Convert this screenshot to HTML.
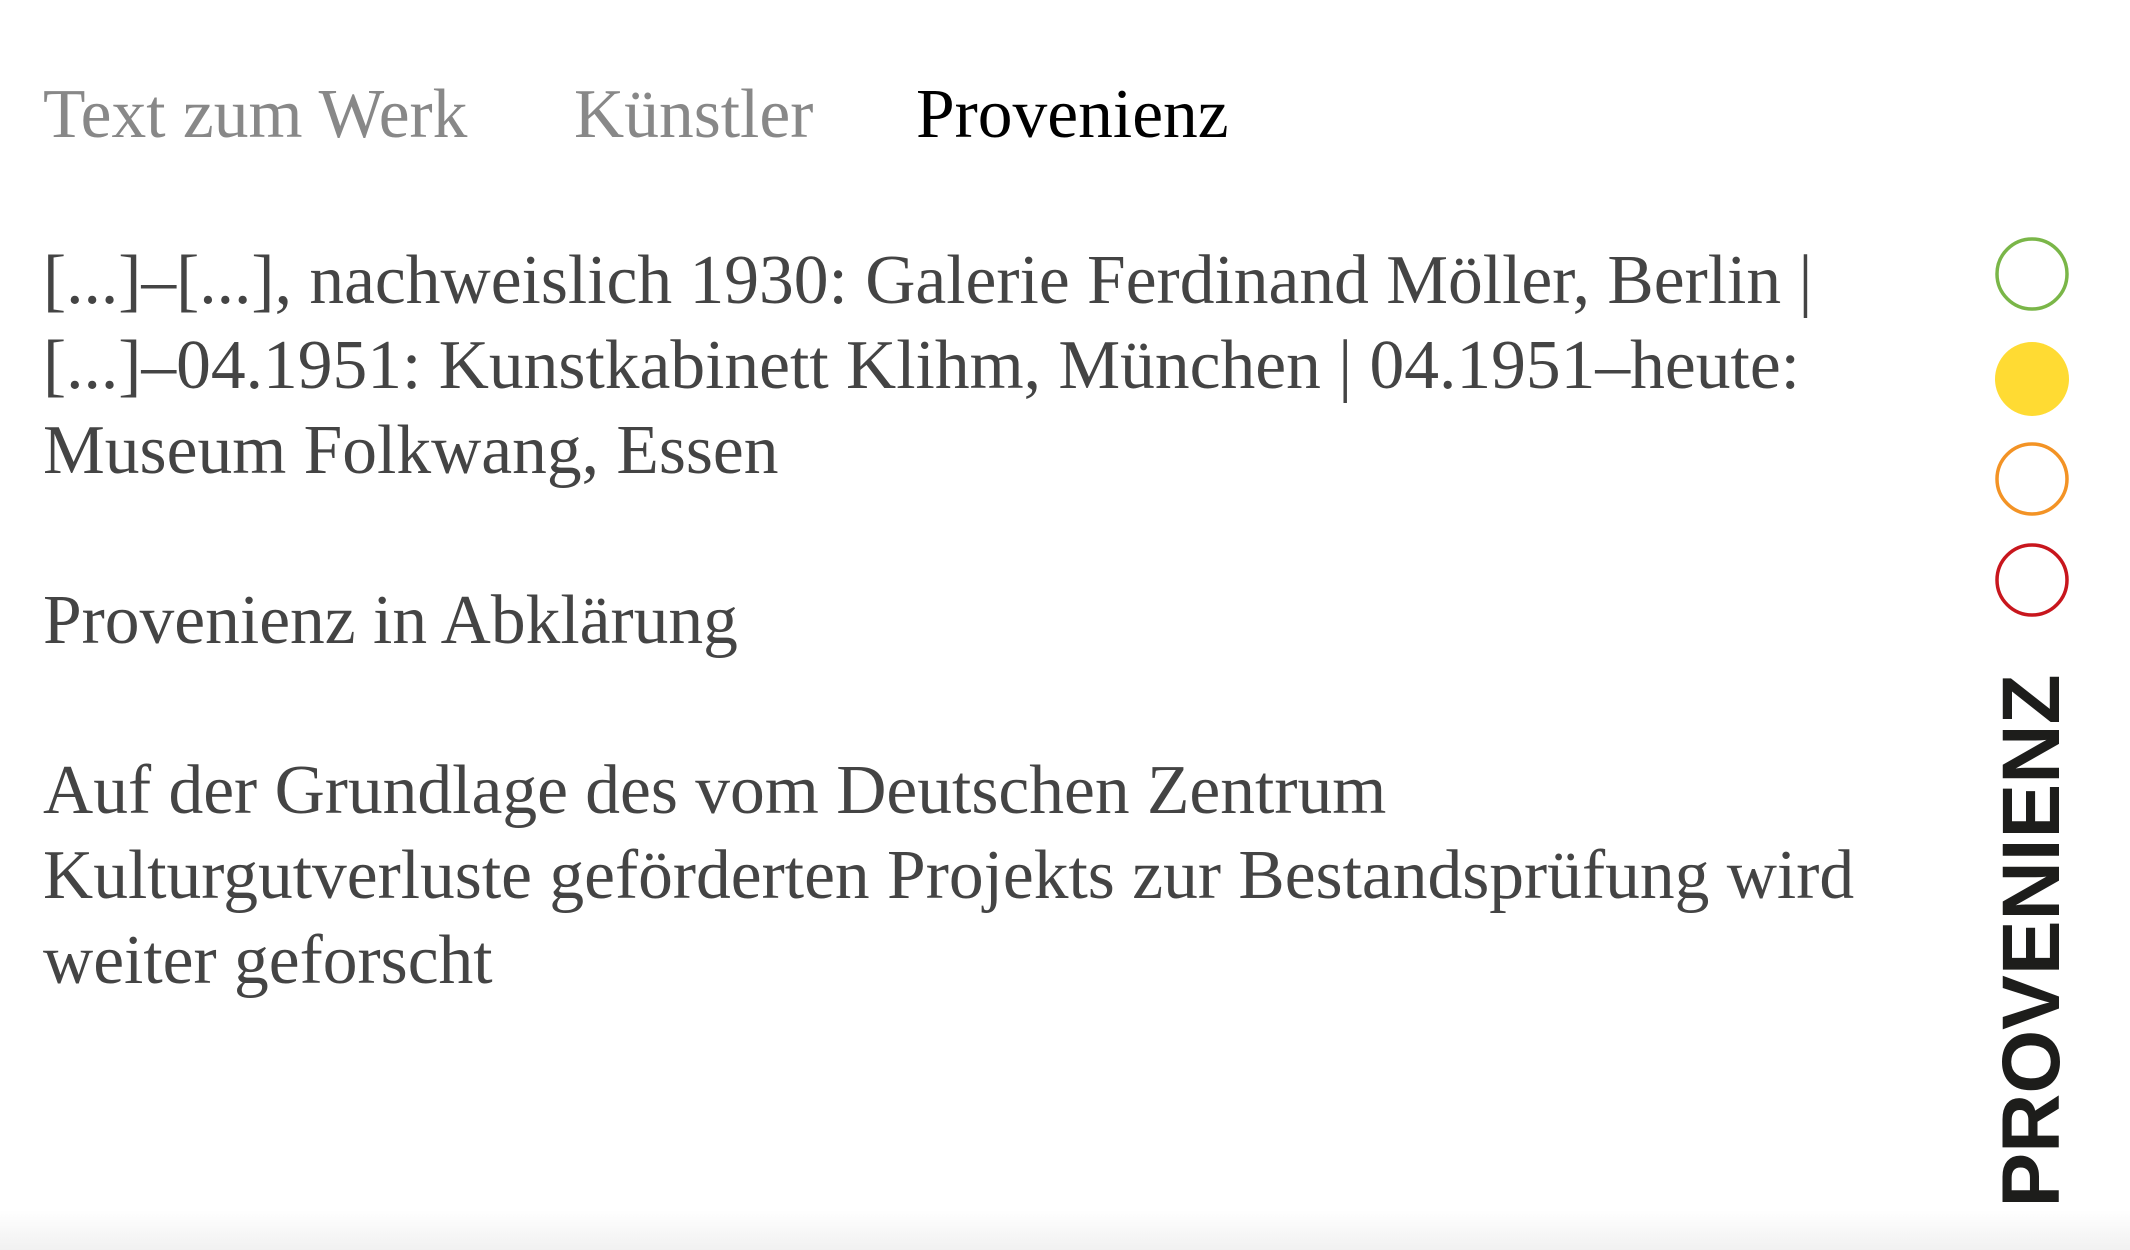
<!DOCTYPE html>
<html><head><meta charset="utf-8"><style>
html,body{margin:0;padding:0;width:2130px;height:1250px;background:#fff;overflow:hidden;position:relative}
.s{font-family:"Liberation Serif",serif;font-size:69.5px;line-height:85px;position:absolute;white-space:nowrap}
.tab{top:72px;color:#888}
.body{left:43px;top:238px;color:#444}
.body p{margin:0 0 85px 0}
.bot{position:absolute;left:0;right:0;bottom:0;height:40px;background:linear-gradient(#fff,#f1f1f1)}
.v{position:absolute;left:2032px;top:941px;transform:translate(-50%,-50%) rotate(-90deg);font-family:"Liberation Sans",sans-serif;font-weight:bold;font-size:82px;color:#1d1d1b;white-space:nowrap;line-height:1}
</style></head><body>
<div class="s tab" style="left:43px">Text zum Werk</div>
<div class="s tab" style="left:574px">Künstler</div>
<div class="s tab" style="left:916px;color:#000">Provenienz</div>
<div class="s body">
<p>[...]–[...], nachweislich 1930: Galerie Ferdinand Möller, Berlin |<br>[...]–04.1951: Kunstkabinett Klihm, München | 04.1951–heute:<br>Museum Folkwang, Essen</p>
<p>Provenienz in Abklärung</p>
<p>Auf der Grundlage des vom Deutschen Zentrum<br>Kulturgutverluste geförderten Projekts zur Bestandsprüfung wird<br>weiter geforscht</p>
</div>
<svg style="position:absolute;left:1990px;top:230px" width="90" height="400">
<circle cx="42" cy="44" r="35" fill="none" stroke="#7ab648" stroke-width="3.5"/>
<circle cx="42" cy="149" r="37" fill="#ffdb33"/>
<circle cx="42" cy="249" r="35" fill="none" stroke="#f39325" stroke-width="3.5"/>
<circle cx="42" cy="350" r="35" fill="none" stroke="#c8161d" stroke-width="3.5"/>
</svg>
<div class="v">PROVENIENZ</div>
<div class="bot"></div>
</body></html>
